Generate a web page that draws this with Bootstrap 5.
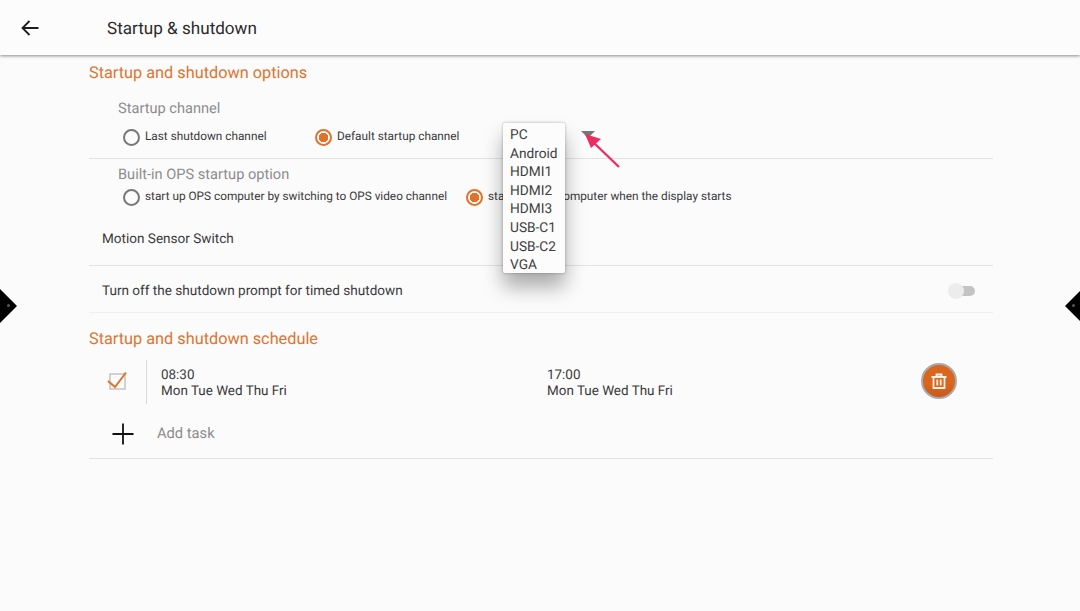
<!DOCTYPE html>
<html lang="en">
<head>
<meta charset="utf-8">
<title>Startup &amp; shutdown</title>
<link href="https://cdn.jsdelivr.net/npm/bootstrap@5.3.0/dist/css/bootstrap.min.css" rel="stylesheet">
<style>
html,body{height:100%}
body{background:#fbfbfb;font-family:Roboto,"Liberation Sans",sans-serif;color:#333;width:1080px;height:611px;overflow:hidden;position:relative;text-rendering:geometricPrecision}
.topbar{height:55px;background:#fcfcfc;box-shadow:0 1px 3px rgba(0,0,0,.45);padding-left:21px;padding-top:1px;position:relative}
.back-ico{width:18px;height:18px;margin-right:68px;flex:none}
.top-title{font-size:17.1px;color:#2b2b2b;padding-top:4px}
.content{margin:0 87px 0 89px}
.sec-head{font-size:16.3px;color:#de7430;line-height:20px}
.sub-head{font-size:14.6px;color:#8d8d8d;line-height:18px;margin-left:29px}
.radio-line{height:22px;font-size:11.8px;color:#3a3a3a;margin-left:34px;white-space:nowrap}
.radio-dot{width:17px;height:17px;border:2px solid #777;border-radius:50%;flex:none;margin-right:5px;display:block}
.radio-dot.on{border-color:#e0722c;background:radial-gradient(circle,#e0722c 0 4.5px,transparent 5px)}
.rule{border-top:1.5px solid #e2e2e2}
.set-row{font-size:13.55px;color:#3a3a3a;padding-left:13px}
.toggle-wrap{width:27px;height:16px;position:relative;margin-right:18px}
.toggle-track{width:20px;height:10px;background:#c4c4c4;border-radius:5px;margin:3px 0 0 7px}
.toggle-thumb{position:absolute;left:0;top:0;width:16px;height:16px;border-radius:50%;background:#ececec}
.task-row{height:44px;margin-top:11px;font-size:13.45px;line-height:16px;color:#3a3a3a}
.task-check{width:58px;padding-left:18px;padding-bottom:2px;height:44px;border-right:1px solid #d9d9d9;flex:none}
.task-a{width:400px;padding-left:14px;padding-top:4px;flex:none}
.task-b{width:374px;padding-top:4px;flex:none}
.trash-btn{width:36px;height:36px;border-radius:50%;border:2px solid #a9a9a9;background:linear-gradient(#d9651f 0 60%,#c95a19 100%);flex:none;padding:0;margin-bottom:3px}
.add-row{height:41px;margin-top:9px;font-size:14.7px;color:#8c8c8c}
.add-ico{width:24px;height:24px;margin:0 22px 0 22px;flex:none}
.menu-pop{position:absolute;left:503px;top:123px;width:62px;height:150px;background:#fcfcfc;border-radius:2px;box-shadow:0 0 3px rgba(0,0,0,.3),0 14px 20px rgba(0,0,0,.32);padding:3px 0 0 7px;font-size:13.7px;line-height:18.6px;color:#3f3f3f}
.over-svg{position:absolute;left:575px;top:125px}
.side-l,.side-r{position:absolute;top:293.5px;width:24px;height:24px;background:#000;transform:rotate(45deg)}
.side-l{left:-12px}
.side-r{left:1070px}
.side-dot{position:absolute;width:3px;height:3px;border-radius:50%;background:#555;top:304px}
</style>
</head>
<body>
<header class="topbar d-flex align-items-center">
  <svg class="back-ico" viewBox="0 0 18 18" fill="none" stroke="#1c1c1c" stroke-width="1.8"><path d="M17.5 9H1.5M8.5 2 1.5 9l7 7"/></svg>
  <span class="top-title">Startup &amp; shutdown</span>
</header>
<main class="content">
  <div class="sec-head" style="margin-top:8px">Startup and shutdown options</div>
  <div class="sub-head" style="margin-top:16px">Startup channel</div>
  <div class="radio-line d-flex align-items-center" style="margin-top:9px">
    <span class="d-flex align-items-center" style="width:192px"><i class="radio-dot"></i>Last shutdown channel</span>
    <span class="d-flex align-items-center"><i class="radio-dot on"></i>Default startup channel</span>
  </div>
  <div class="rule" style="margin-top:10px"></div>
  <div class="sub-head" style="margin-top:6px">Built-in OPS startup option</div>
  <div class="radio-line d-flex align-items-center" style="margin-top:3px">
    <span class="d-flex align-items-center" style="width:343px"><i class="radio-dot"></i>start up OPS computer by switching to OPS video channel</span>
    <span class="d-flex align-items-center"><i class="radio-dot on"></i>start up OPS computer when the display starts</span>
  </div>
  <div class="set-row d-flex align-items-center" style="height:54px;margin-top:3px;padding-top:2px">Motion Sensor Switch</div>
  <div class="rule"></div>
  <div class="set-row d-flex align-items-center justify-content-between" style="height:46px;padding-top:4px">
    <span>Turn off the shutdown prompt for timed shutdown</span>
    <span class="toggle-wrap d-block"><span class="toggle-track d-block"></span><span class="toggle-thumb d-block"></span></span>
  </div>
  <div class="rule" style="border-color:#efefef"></div>
  <div class="sec-head" style="margin-top:16px">Startup and shutdown schedule</div>
  <div class="task-row d-flex align-items-center">
    <div class="task-check d-flex align-items-center">
      <svg width="22" height="20" viewBox="0 0 22 20" fill="none"><rect x="3" y="3" width="15" height="15" stroke="#c4c4c4" stroke-width="1.5"/><path d="M1 10l7 6L19 1.500" stroke="#e0722c" stroke-width="2"/></svg>
    </div>
    <div class="task-a">08:30<br>Mon Tue Wed Thu Fri</div>
    <div class="task-b">17:00<br>Mon Tue Wed Thu Fri</div>
    <button class="trash-btn d-flex align-items-center justify-content-center" type="button" aria-label="Delete">
      <svg width="16" height="16" viewBox="0 0 16 16" fill="none" stroke="#fff1e6" stroke-width="1.800"><path d="M.5 4h15M5.500 4V1.500h5V4M2.500 4v11h11V4M6.300 6.500v6M9.700 6.500v6"/></svg>
    </button>
  </div>
  <div class="add-row d-flex align-items-center">
    <svg class="add-ico" viewBox="0 0 24 24" stroke="#111" stroke-width="1.800"><path d="M12 1.500v21M1.500 12h21"/></svg>
    Add task
  </div>
  <div class="rule" style="margin-top:4px"></div>
</main>
<div class="menu-pop">
  <div>PC</div><div>Android</div><div>HDMI1</div><div>HDMI2</div><div>HDMI3</div><div>USB-C1</div><div>USB-C2</div><div>VGA</div>
</div>
<svg class="over-svg" width="50" height="46" viewBox="0 0 50 46" fill="none">
  <path d="M6 6h14l-7 7z" fill="#777"/>
  <path d="M44 42 17 16" stroke="#ef2b60" stroke-width="2.300"/>
  <path d="M10 9l16 5-10 9z" fill="#ef2b60"/>
</svg>
<div class="side-l"></div><div class="side-dot" style="left:7px"></div>
<div class="side-r"></div><div class="side-dot" style="left:1072px"></div>
<script src="https://cdn.jsdelivr.net/npm/bootstrap@5.3.0/dist/js/bootstrap.bundle.min.js"></script>
</body>
</html>
